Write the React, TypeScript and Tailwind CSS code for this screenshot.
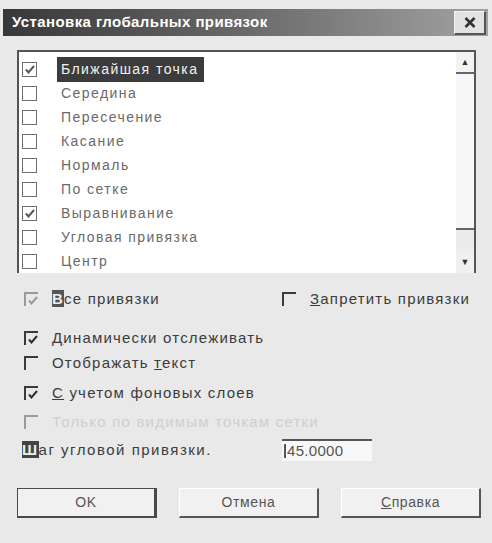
import React from "react";

const font = { fontFamily: '"Liberation Sans", Arial, sans-serif' };

const snaps: { label: string; checked: boolean }[] = [
  { label: "Ближайшая точка", checked: true },
  { label: "Середина", checked: false },
  { label: "Пересечение", checked: false },
  { label: "Касание", checked: false },
  { label: "Нормаль", checked: false },
  { label: "По сетке", checked: false },
  { label: "Выравнивание", checked: true },
  { label: "Угловая привязка", checked: false },
  { label: "Центр", checked: false },
];

function Tick({ color }: { color: string }) {
  return (
    <svg width="12" height="12" viewBox="0 0 12 12" className="absolute left-[1px] top-[1px]">
      <path d="M2 5.5 L4.5 8.5 L10 2" fill="none" stroke={color} strokeWidth="2" />
    </svg>
  );
}

function ListBox({ checked }: { checked: boolean }) {
  return (
    <div className="relative w-[15px] h-[15px] border border-[#6f6f6f] bg-white shrink-0">
      {checked && <Tick color="#555" />}
    </div>
  );
}

function OldBox({ checked, dim }: { checked: boolean; dim?: boolean }) {
  return (
    <div
      className={
        "relative w-[14px] h-[14px] shrink-0 border-t-2 border-l-2 " +
        (dim ? "border-[#9a9a9a]" : "border-[#3a3a3a]")
      }
    >
      {checked && <Tick color={dim ? "#9a9a9a" : "#2e2e2e"} />}
    </div>
  );
}

function Row({
  checked,
  dim,
  children,
}: {
  checked: boolean;
  dim?: boolean;
  children: React.ReactNode;
}) {
  return (
    <div className="flex items-center gap-[14px] h-[20px]">
      <OldBox checked={checked} dim={dim} />
      <span className="text-[15px] tracking-[1.2px] text-[#3c3c3c] whitespace-nowrap">{children}</span>
    </div>
  );
}

function Btn({ children, def }: { children: React.ReactNode; def?: boolean }) {
  return (
    <div
      className={
        "w-[140px] h-[30px] flex items-center justify-center text-[14px] tracking-[0.6px] text-[#555] bg-[#f1f1f1] " +
        (def
          ? "border border-[#4a4a4a] border-r-[3px] border-b-2"
          : "border-l border-t border-l-white border-t-white border-r-2 border-b-2 border-r-[#555] border-b-[#555]")
      }
    >
      {children}
    </div>
  );
}

export default function App() {
  return (
    <div className="w-[492px] h-[543px] bg-[#e9e9e9] overflow-hidden" style={font}>
      {/* title bar */}
      <div className="mt-[9px] ml-[3px] mr-[4px] h-[27px] flex items-center justify-between pl-[9px] pr-[2px] bg-gradient-to-r from-[#383838] via-[#6a6a6a] to-[#a2a2a2]">
        <span className="text-white font-bold text-[15px] tracking-[0.4px]">Установка глобальных привязок</span>
        <div className="w-[32px] h-[24px] bg-[#e2e2e2] border border-[#f5f5f5] border-r-2 border-b-2 border-r-[#555] border-b-[#555] flex items-center justify-center">
          <svg width="12" height="11" viewBox="0 0 12 11">
            <path d="M1.5 1 L10.5 10 M10.5 1 L1.5 10" stroke="#333" strokeWidth="2.6" />
          </svg>
        </div>
      </div>

      {/* snap list */}
      <div className="mt-[14px] ml-[17px] w-[459px] h-[223px] flex bg-white border-l-2 border-t-2 border-[#555]">
        <div className="flex-1 flex flex-col pt-[5px] pl-[3px]">
          {snaps.map((s, i) => (
            <div key={s.label} className="h-[24px] flex items-center gap-[20px]">
              <ListBox checked={s.checked} />
              <span
                className={
                  "text-[14px] tracking-[1.45px] px-[4px] py-[2px] " +
                  (i === 0 ? "bg-[#3c3c3c] text-[#f2f2f2] pr-[6px]" : "text-[#6a6a6a]")
                }
              >
                {s.label}
              </span>
            </div>
          ))}
        </div>
        <div className="w-[20px] flex flex-col bg-[#ececec] border-r-2 border-[#555]">
          <div className="h-[22px] flex items-center justify-center border-b-2 border-[#666] bg-[#f3f3f3]">
            <span className="text-[#333] text-[9px] leading-none">▲</span>
          </div>
          <div className="h-[156px] bg-[#f7f7f7] border-b-2 border-[#666]" />
          <div className="flex-1" />
          <div className="h-[22px] flex items-center justify-center bg-[#f0f0f0]">
            <span className="text-[#333] text-[9px] leading-none">▼</span>
          </div>
        </div>
      </div>

      {/* options */}
      <div className="mt-[16px] pl-[24px] pr-[10px] flex flex-col">
        <div className="flex items-center h-[20px]">
          <div className="w-[258px]">
            <Row checked dim>
              <span className="bg-[#555] text-[#eee] font-bold">В</span>се привязки
            </Row>
          </div>
          <Row checked={false}>
            <span className="underline">З</span>апретить привязки
          </Row>
        </div>
        <div className="mt-[19px]">
          <Row checked>
            <span className="underline">Д</span>инамически отслеживать
          </Row>
        </div>
        <div className="mt-[5px]">
          <Row checked={false}>
            Отображать <span className="underline">т</span>екст
          </Row>
        </div>
        <div className="mt-[10px]">
          <Row checked>
            <span className="underline">С</span> учетом фоновых слоев
          </Row>
        </div>
        <div className="mt-[9px]">
          <Row checked={false} dim>
            <span className="text-[#cfcfcf]">Только по видимым точкам сетки</span>
          </Row>
        </div>
        <div className="mt-[7px] flex items-center h-[22px]">
          <span className="-ml-[2px] w-[260px] text-[15px] tracking-[1.5px] text-[#3c3c3c] whitespace-nowrap">
            <span className="bg-[#444] text-[#eee] font-bold">Ш</span>аг угловой привязки.
          </span>
          <div className="w-[90px] h-[22px] bg-[#f8f8f8] border-t-2 border-[#555] flex items-center pl-[2px]">
            <span className="w-[2px] h-[14px] bg-[#555] mr-[1px]" />
            <span className="text-[15px] tracking-[0.3px] text-[#555]">45.0000</span>
          </div>
        </div>
      </div>

      {/* buttons */}
      <div className="mt-[27px] ml-[17px] flex gap-[22px]">
        <Btn def>OK</Btn>
        <Btn>Отмена</Btn>
        <Btn>
          <span className="underline">С</span>правка
        </Btn>
      </div>
    </div>
  );
}
